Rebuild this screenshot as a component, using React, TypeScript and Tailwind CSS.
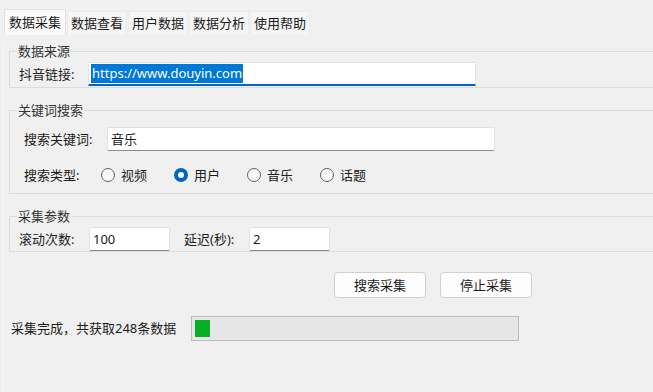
import React from 'react';

const tabs = ['数据采集', '数据查看', '用户数据', '数据分析', '使用帮助'];
const radios = ['视频', '用户', '音乐', '话题'];

const Radio: React.FC<{ label: string; checked?: boolean }> = ({ label, checked }) => (
    <div className="flex items-center w-[73px] h-[24px]">
        {checked ? (
            <span className="w-[14px] h-[14px] rounded-full bg-[#0067c0] flex items-center justify-center">
                <span className="w-[6px] h-[6px] rounded-full bg-white"></span>
            </span>
        ) : (
            <span className="w-[14px] h-[14px] rounded-full border border-[#616161] bg-[#f7f7f7]"></span>
        )}
        <span className="ml-[6px]">{label}</span>
    </div>
);

const TextBox: React.FC<{ value: string; className: string }> = ({ value, className }) => (
    <div className={`h-[24px] bg-white border border-[#e2e2e2] border-b-[#8c8c8c] rounded-[2px] flex items-center pl-[3px] ${className}`}>
        {value}
    </div>
);

export default function App() {
    return (
        <div className="w-[653px] h-[392px] overflow-hidden bg-[#f0f0f0] text-[13px] leading-[17px] text-[#1b1b1b] font-['Noto_Sans','Noto_Sans_CJK_SC',sans-serif]">
            {/* top strip */}
            <div className="h-[3px] bg-[#eef1f6]"></div>

            {/* Tab headers */}
            <div className="h-[32px] flex items-end pl-[4px]">
                {tabs.map((t, i) =>
                    i === 0 ? (
                        <div key={t} className="h-[26px] w-[62px] bg-[#fafafa] border border-b-0 border-[#e3e3e3] flex items-center justify-center">
                            {t}
                        </div>
                    ) : (
                        <div key={t} className="h-[23px] w-[60px] ml-[1px] mb-[1px] bg-[#f5f5f5] border border-b-0 border-[#ebebeb] flex items-center justify-center">
                            {t}
                        </div>
                    )
                )}
            </div>

            {/* Tab panel */}
            <div className="h-[357px] border-l border-[#f8f8f8] ml-[3px] pl-[5px]">
                {/* 数据来源 */}
                <fieldset className="mt-[8px] w-[660px] border border-r-0 border-[#dcdcdc]">
                    <legend className="ml-[7px] px-[1px] text-[#333]">数据来源</legend>
                    <div className="pt-[2px] pb-[1px] pl-[9px] flex items-center">
                        <span className="w-[69px]">抖音链接:</span>
                        <div className="h-[24px] w-[388px] bg-white border border-[#e2e2e2] border-b-2 border-b-[#0a64c4] rounded-t-[2px] flex items-center pl-[2px]">
                            <span className="bg-[#0078d7] text-white px-[1px] leading-[19px]">https://www.douyin.com</span>
                        </div>
                    </div>
                </fieldset>

                {/* 关键词搜索 */}
                <fieldset className="mt-[14px] w-[660px] border border-r-0 border-[#dcdcdc]">
                    <legend className="ml-[7px] px-[1px] text-[#333]">关键词搜索</legend>
                    <div className="pt-[8px] pb-[6px] pl-[14px]">
                        <div className="flex items-center">
                            <span className="w-[83px]">搜索关键词:</span>
                            <TextBox value="音乐" className="w-[388px]" />
                        </div>
                        <div className="mt-[12px] flex items-center">
                            <span className="w-[77px]">搜索类型:</span>
                            {radios.map((r) => (
                                <Radio key={r} label={r} checked={r === '用户'} />
                            ))}
                        </div>
                    </div>
                </fieldset>

                {/* 采集参数 */}
                <fieldset className="mt-[14px] w-[660px] border border-r-0 border-[#dcdcdc]">
                    <legend className="ml-[7px] px-[1px] text-[#333]">采集参数</legend>
                    <div className="pt-[2px] pl-[9px] flex items-center">
                        <span className="w-[70px]">滚动次数:</span>
                        <TextBox value="100" className="w-[81px]" />
                        <span className="ml-[14px] w-[65px]">延迟(秒):</span>
                        <TextBox value="2" className="w-[81px]" />
                    </div>
                </fieldset>

                {/* Buttons */}
                <div className="mt-[20px] ml-[325px] flex gap-[14px]">
                    <button className="h-[26px] w-[92px] bg-[#fdfdfd] border border-[#d0d0d0] rounded-[4px]">搜索采集</button>
                    <button className="h-[26px] w-[92px] bg-[#fdfdfd] border border-[#d0d0d0] rounded-[4px]">停止采集</button>
                </div>

                {/* Status */}
                <div className="mt-[18px] ml-[2px] flex items-center h-[25px]">
                    <span className="w-[180px]">采集完成，共获取248条数据</span>
                    <div className="h-[25px] w-[328px] border border-[#bcbcbc] bg-[#e6e6e6] p-[3px]">
                        <div className="h-[17px] w-[15px] bg-[#06b025]"></div>
                    </div>
                </div>
            </div>
        </div>
    );
}
